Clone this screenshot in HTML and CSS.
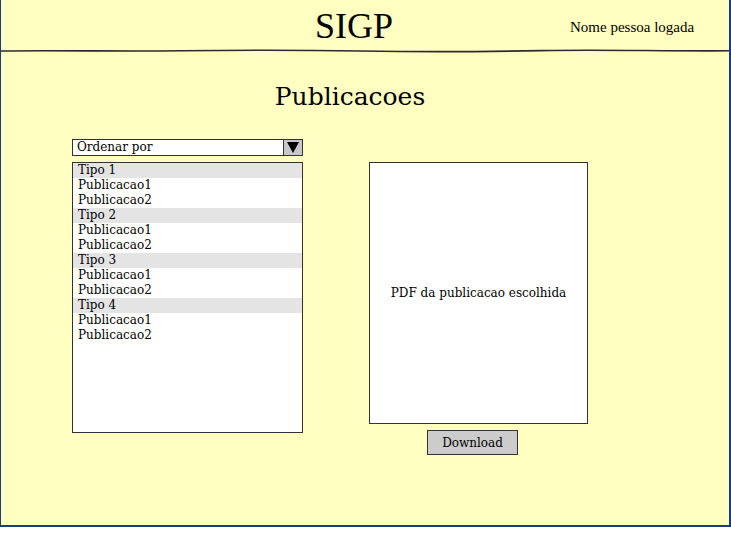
FILE: index.html
```html
<!DOCTYPE html>
<html>
<head>
<meta charset="utf-8">
<link rel="stylesheet" href="styles.css">
</head>
<body>
<div class="frame">
  <header class="topbar">
    <div class="brand">SIGP</div>
    <div class="user">Nome pessoa logada</div>
    <svg class="rule" width="728" height="4" viewBox="0 0 728 4" preserveAspectRatio="none">
      <path d="M0 2 C60 1.2 120 2.6 180 1.8 S300 1 360 2 S480 2.8 540 1.6 S660 2.2 728 1.8" fill="none" stroke="#2b2b2b" stroke-width="1.6"/>
    </svg>
  </header>
  <main class="content">
    <h1 class="title">Publicacoes</h1>
    <div class="columns">
      <div class="left">
        <div class="select">
          <span class="select-label">Ordenar por</span>
          <span class="select-btn"><svg width="14" height="13" viewBox="0 0 14 13"><path d="M1 1 H13 L7 12 Z" fill="#000"/></svg></span>
        </div>
        <div class="list">
          <div class="row group">Tipo 1</div>
          <div class="row">Publicacao1</div>
          <div class="row">Publicacao2</div>
          <div class="row group">Tipo 2</div>
          <div class="row">Publicacao1</div>
          <div class="row">Publicacao2</div>
          <div class="row group">Tipo 3</div>
          <div class="row">Publicacao1</div>
          <div class="row">Publicacao2</div>
          <div class="row group">Tipo 4</div>
          <div class="row">Publicacao1</div>
          <div class="row">Publicacao2</div>
        </div>
      </div>
      <div class="right">
        <div class="pdf">PDF da publicacao escolhida</div>
        <button class="download">Download</button>
      </div>
    </div>
  </main>
</div>
</body>
</html>
```

FILE: styles.css
```css
html, body {
  margin: 0;
  padding: 0;
  background: #ffffff;
}
.frame {
  box-sizing: border-box;
  width: 731px;
  height: 527px;
  background: #ffffc1;
  border-left: 1px solid #1d3a80;
  border-right: 2px solid #1d3a80;
  border-bottom: 2px solid #1d3a80;
  font-family: "DejaVu Serif", serif;
  color: #000;
}
.topbar {
  position: relative;
  height: 53px;
}
.brand {
  position: absolute;
  left: 314px;
  top: 6px;
  font-family: "Liberation Serif", serif;
  font-size: 36px;
  line-height: 40px;
}
.user {
  position: absolute;
  left: 569px;
  top: 18px;
  font-family: "Liberation Serif", serif;
  font-size: 15px;
  line-height: 18px;
}
.rule {
  position: absolute;
  left: 0;
  top: 49px;
  display: block;
}
.content {
  padding-left: 71px;
  width: 556px;
}
.title {
  margin: 0;
  padding-top: 30px;
  text-align: center;
  font-weight: normal;
  font-size: 25px;
  line-height: 28px;
}
.columns {
  display: flex;
  gap: 66px;
  margin-top: 28px;
}
.left {
  display: flex;
  flex-direction: column;
  gap: 6px;
  width: 231px;
}
.select {
  display: flex;
  height: 17px;
  box-sizing: border-box;
  border: 1px solid #333;
  background: #fff;
}
.select-label {
  flex: 1;
  padding-left: 4px;
  font-size: 12px;
  line-height: 15px;
}
.select-btn {
  width: 18px;
  border-left: 1px solid #333;
  background: #c8c8c8;
  display: flex;
  align-items: center;
  justify-content: center;
}
.list {
  box-sizing: border-box;
  height: 271px;
  border: 1px solid #333;
  background: #fff;
}
.row {
  height: 15px;
  line-height: 15px;
  padding-left: 5px;
  font-size: 12px;
}
.row.group {
  background: #e4e4e4;
}
.right {
  margin-top: 23px;
  display: flex;
  flex-direction: column;
  gap: 6px;
  width: 219px;
}
.pdf {
  box-sizing: border-box;
  height: 262px;
  border: 1px solid #333;
  background: #fff;
  display: flex;
  align-items: center;
  justify-content: center;
  font-size: 12px;
}
.download {
  margin-left: 58px;
  width: 91px;
  height: 25px;
  box-sizing: border-box;
  border: 1px solid #333;
  background: #cccccc;
  font-family: "DejaVu Serif", serif;
  font-size: 12px;
  color: #000;
  padding: 0;
}
```
